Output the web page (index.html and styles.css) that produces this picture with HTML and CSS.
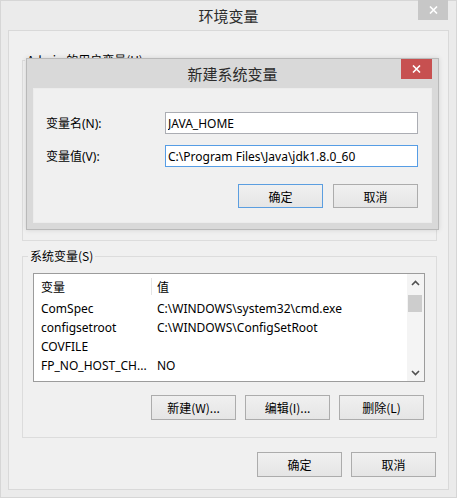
FILE: index.html
```html
<!DOCTYPE html>
<html lang="zh-CN">
<head>
    <meta charset="UTF-8">
    <title>环境变量</title>
    <link rel="stylesheet" href="styles.css">
</head>
<body>
    <div class="window">
        <div class="titlebar">
            <span class="title">环境变量</span>
            <span class="close close-inactive">
                <svg width="9" height="8" viewBox="0 0 9 8"><path d="M1 0.5 L8 7.5 M8 0.5 L1 7.5" stroke="#fff" stroke-width="1.6"/></svg>
            </span>
        </div>

        <div class="client">
            <!-- user variables, mostly hidden behind the dialog -->
            <fieldset class="group group-user">
                <legend>Admin 的用户变量(U)</legend>
            </fieldset>

            <fieldset class="group group-sys">
                <legend>系统变量(S)</legend>
                <div class="listview">
                    <div class="list-body">
                        <div class="list-head">
                            <div class="col-name">变量</div>
                            <div class="col-value">值</div>
                        </div>
                        <div class="row"><div class="col-name">ComSpec</div><div class="col-value">C:\WINDOWS\system32\cmd.exe</div></div>
                        <div class="row"><div class="col-name">configsetroot</div><div class="col-value">C:\WINDOWS\ConfigSetRoot</div></div>
                        <div class="row"><div class="col-name">COVFILE</div><div class="col-value"></div></div>
                        <div class="row"><div class="col-name">FP_NO_HOST_CH...</div><div class="col-value">NO</div></div>
                    </div>
                    <div class="scrollbar">
                        <div class="arrow">
                            <svg width="9" height="6" viewBox="0 0 9 6"><path d="M1 5 L4.5 1.5 L8 5" fill="none" stroke="#505050" stroke-width="1.6"/></svg>
                        </div>
                        <div class="track"><div class="thumb"></div></div>
                        <div class="arrow">
                            <svg width="9" height="6" viewBox="0 0 9 6"><path d="M1 1 L4.5 4.5 L8 1" fill="none" stroke="#505050" stroke-width="1.6"/></svg>
                        </div>
                    </div>
                </div>
                <div class="btn-row">
                    <button class="btn">新建(W)...</button>
                    <button class="btn">编辑(I)...</button>
                    <button class="btn">删除(L)</button>
                </div>
            </fieldset>

            <div class="btn-row actions">
                <button class="btn">确定</button>
                <button class="btn">取消</button>
            </div>
        </div>

        <!-- modal dialog on top -->
        <div class="dialog">
            <div class="titlebar dialog-titlebar">
                <span class="title">新建系统变量</span>
                <span class="close close-active">
                    <svg width="9" height="8" viewBox="0 0 9 8"><path d="M1 0.5 L8 7.5 M8 0.5 L1 7.5" stroke="#fff" stroke-width="1.6"/></svg>
                </span>
            </div>
            <div class="dialog-client">
                <div class="form">
                    <label>变量名(N):</label>
                    <input class="textbox" type="text" value="JAVA_HOME">
                    <label>变量值(V):</label>
                    <input class="textbox focused" type="text" value="C:\Program Files\Java\jdk1.8.0_60">
                </div>
                <div class="btn-row dialog-buttons">
                    <button class="btn btn-default">确定</button>
                    <button class="btn">取消</button>
                </div>
            </div>
        </div>
    </div>
</body>
</html>
```

FILE: styles.css
```css
* {
    box-sizing: border-box;
}
body {
    margin: 0;
    background: #ebebeb;
    font-family: "Noto Sans", "Noto Sans CJK SC", sans-serif;
    font-size: 12px;
    color: #000;
}
.window {
    position: relative;
    width: 457px;
    height: 498px;
    padding: 0 8px 8px;
    background: #ebebeb;
    box-shadow: inset 0 0 0 1px #d6d6d6;
}
.titlebar {
    position: relative;
    height: 30px;
    display: flex;
    align-items: center;
    justify-content: center;
}
.title {
    font-family: "Noto Sans CJK SC", sans-serif;
    font-size: 15px;
    color: #2b2b2b;
}
.close {
    position: absolute;
    top: 0;
    width: 30px;
    height: 20px;
    display: flex;
    align-items: center;
    justify-content: center;
}
.close-inactive {
    right: 1px;
    background: #c7c7c7;
}
.close-active {
    right: 0;
    width: 31px;
    background: #c75050;
}
.client {
    height: 460px;
    border: 1px solid #d9d9d9;
    background: #f0f0f0;
    padding: 21px 11px 0 13px;
}
.group {
    margin: 0;
    border: 1px solid #dcdcdc;
    min-width: 0;
}
.group legend {
    line-height: 16px;
    padding: 0 2px;
    font-family: "Noto Sans CJK SC", sans-serif;
}
.group-user {
    height: 189px;
    padding: 0;
}
.group-user legend {
    margin-left: 2px;
}
.group-sys {
    margin-top: 7px;
    padding: 0 11px 17px 10px;
}
.group-sys legend {
    margin-left: -5px;
}
.listview {
    margin-top: 9px;
    height: 109px;
    border: 1px solid #9c9c9c;
    background: #fff;
    display: flex;
}
.list-body {
    flex: 1;
    overflow: hidden;
}
.list-head,
.row {
    display: flex;
    white-space: nowrap;
}
.list-head {
    height: 25px;
    align-items: center;
    font-family: "Noto Sans CJK SC", sans-serif;
}
.list-head .col-name {
    border-right: 1px solid #e5e5e5;
}
.row {
    height: 19px;
    align-items: center;
}
.col-name {
    width: 118px;
    padding-left: 7px;
    overflow: hidden;
}
.col-value {
    padding-left: 5px;
}
.scrollbar {
    width: 17px;
    display: flex;
    flex-direction: column;
    background: #f4f4f4;
}
.arrow {
    height: 17px;
    display: flex;
    align-items: center;
    justify-content: center;
}
.track {
    flex: 1;
    padding: 4px 2px 0 1px;
}
.thumb {
    height: 17px;
    background: #cdcdcd;
}
.btn-row {
    display: flex;
    justify-content: flex-end;
    gap: 9px;
}
.group-sys .btn-row {
    margin-top: 13px;
    padding-right: 1px;
}
.btn {
    width: 85px;
    height: 25px;
    padding: 0;
    border: 1px solid #acacac;
    background: linear-gradient(#f0f0f0, #e5e5e5);
    font-family: "Noto Sans CJK SC", sans-serif;
    font-size: 12px;
    color: #000;
}
.actions {
    margin-top: 14px;
    padding-right: 1px;
}
.dialog {
    position: absolute;
    left: 26px;
    top: 58px;
    width: 413px;
    height: 172px;
    padding: 0 6px 6px;
    background: #d9d9d9;
    border: 1px solid #b9b9b9;
    display: flex;
    flex-direction: column;
    box-shadow: 0 0 5px rgba(0, 0, 0, 0.12);
}
.dialog-titlebar {
    height: 29px;
    flex: none;
}
.dialog-client {
    flex: 1;
    border: 1px solid #ececec;
    background: #f0f0f0;
    padding: 23px 13px 0 12px;
}
.form {
    display: grid;
    grid-template-columns: 119px 1fr;
    row-gap: 11px;
    align-items: center;
}
.form label {
    font-family: "Noto Sans", "Noto Sans CJK SC", sans-serif;
}
.textbox {
    height: 22px;
    margin: 0;
    padding: 0 2px;
    border: 1px solid #abadb3;
    background: #fff;
    font-family: "Noto Sans", sans-serif;
    font-size: 12px;
    color: #000;
    outline: none;
}
.textbox.focused {
    border-color: #569de5;
}
.dialog-buttons {
    margin-top: 17px;
    gap: 10px;
}
.dialog-buttons .btn {
    height: 24px;
}
.btn-default {
    border-color: #5b9ee0;
}
```
